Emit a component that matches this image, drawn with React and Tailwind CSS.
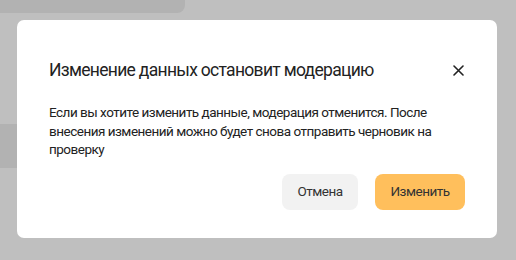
export default function App() {
  return (
    <div
      className="relative w-[516px] h-[260px] overflow-hidden bg-[#bfbfbf]"
      style={{ fontFamily: "Roboto, 'Noto Sans', sans-serif" }}
    >
      {/* page behind the overlay */}
      <div className="absolute left-0 top-0 w-[185px] h-[13px] bg-[#b2b2b2] rounded-br-[8px]" />
      <div className="absolute left-0 top-[124px] w-[40px] h-[44px] bg-[#b2b2b2]" />

      <div className="relative flex pt-[20px] pl-[17px]">
        <div className="w-[480px] h-[218px] bg-white rounded-[7px] pt-[38px] pl-[32px] pr-[32px]">
          <div className="flex items-center justify-between h-[24px]">
            <h2 className="text-[17.5px] leading-[24px] tracking-[-0.7px] text-[#222]">
              Изменение данных остановит модерацию
            </h2>
            <button className="w-[20px] h-[20px] flex items-center justify-center mr-[-3px]">
              <svg width="11" height="11" viewBox="0 0 11 11">
                <path d="M1 1 L10 10 M10 1 L1 10" stroke="#222" strokeWidth="1.6" strokeLinecap="round" />
              </svg>
            </button>
          </div>

          <p className="mt-[21px] text-[13.5px] leading-[18.5px] tracking-[-0.5px] text-[#222]">
            Если вы хотите изменить данные, модерация отменится. После внесения изменений можно будет снова отправить черновик на проверку
          </p>

          <div className="flex justify-end gap-[17px] mt-[15px]">
            <button className="w-[76px] h-[36px] rounded-[8px] bg-[#f2f2f2] text-[13.5px] tracking-[-0.5px] text-[#333]">
              Отмена
            </button>
            <button className="w-[90px] h-[36px] rounded-[8px] bg-[#ffbf5c] text-[13.5px] tracking-[-0.5px] text-[#333]">
              Изменить
            </button>
          </div>
        </div>
      </div>
    </div>
  );
}
